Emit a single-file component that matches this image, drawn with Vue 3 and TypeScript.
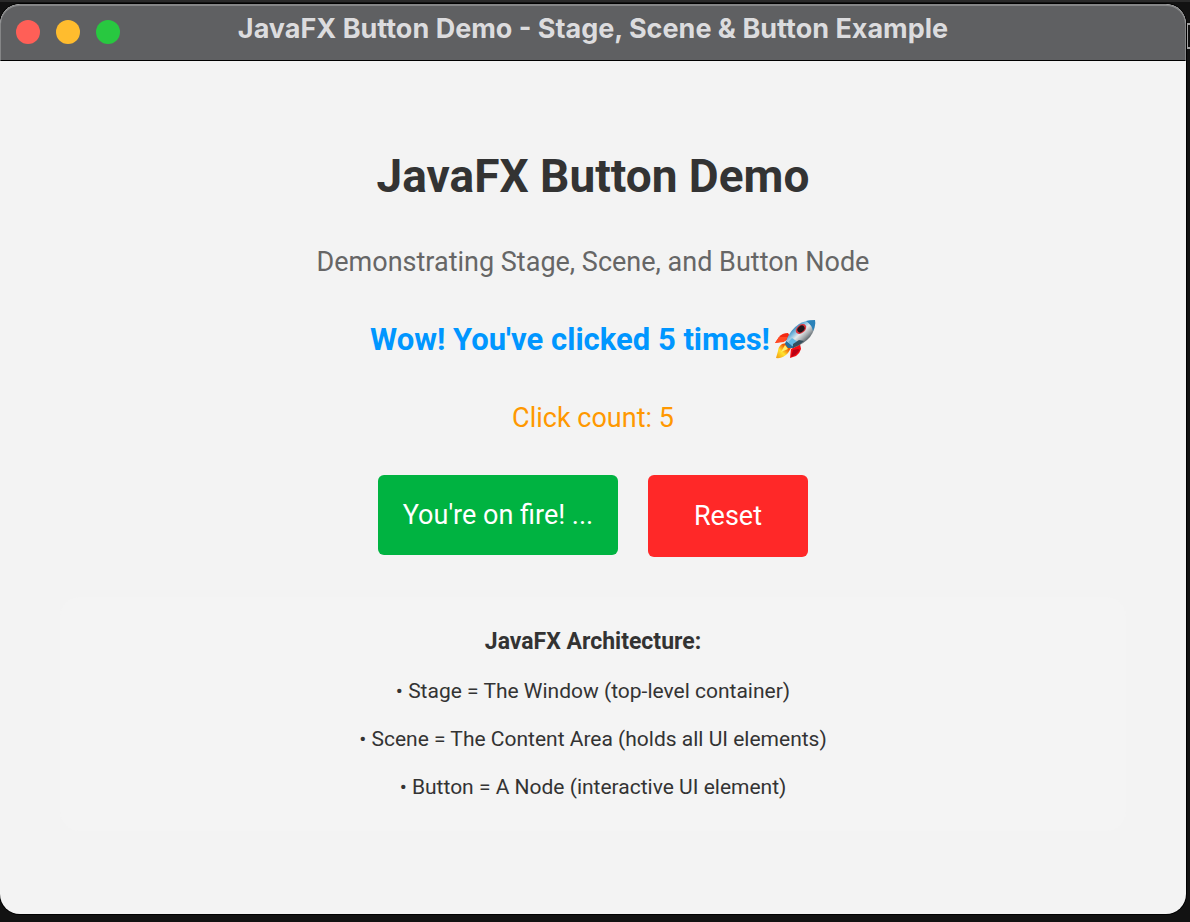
<script setup lang="ts">
import { computed, ref } from 'vue'

const clicks = ref<number>(5)

const message = computed<string>(() => {
  if (clicks.value === 0) return 'Welcome! Click the button below.'
  if (clicks.value === 1) return "You've clicked once!"
  return `Wow! You've clicked ${clicks.value} times!`
})
const buttonLabel = computed<string>(() => (clicks.value >= 5 ? "You're on fire! ..." : 'Click Me!'))

const notes: string[] = [
  '• Stage = The Window (top-level container)',
  '• Scene = The Content Area (holds all UI elements)',
  '• Button = A Node (interactive UI element)',
]
</script>

<template>
  <div class="desktop">
    <div class="behind" aria-hidden="true"></div>
    <section class="window">
      <header class="titlebar">
        <div class="lights">
          <button class="light close" aria-label="Close"></button>
          <button class="light minimize" aria-label="Minimize"></button>
          <button class="light zoom" aria-label="Zoom"></button>
        </div>
        <span class="caption">JavaFX Button Demo - Stage, Scene &amp; Button Example</span>
      </header>
      <main class="scene">
        <h1>JavaFX Button Demo</h1>
        <p class="subtitle">Demonstrating Stage, Scene, and Button Node</p>
        <p class="message">
          <span>{{ message }}</span>
          <svg class="rocket" viewBox="0 0 42 42" role="img" aria-label="Rocket">
            <defs>
              <linearGradient id="hull" x1="14" y1="12" x2="28" y2="27" gradientUnits="userSpaceOnUse">
                <stop offset="0" stop-color="#2674aa" />
                <stop offset=".25" stop-color="#76b7dc" />
                <stop offset=".5" stop-color="#e6eaec" />
                <stop offset=".75" stop-color="#a3aaae" />
                <stop offset="1" stop-color="#4d565c" />
              </linearGradient>
              <linearGradient id="flame" x1="12" y1="28" x2="2" y2="39" gradientUnits="userSpaceOnUse">
                <stop offset="0" stop-color="#f05a00" />
                <stop offset=".45" stop-color="#ffe32e" />
                <stop offset="1" stop-color="#f39a12" />
              </linearGradient>
            </defs>
            <path d="M14 14Q8 14 5 18L1 24L11 22L17 19Z" fill="#f32912" />
            <path d="M5 18L1 24L10 23L14 18Z" fill="#ff4b24" />
            <path d="M26 25L27 30Q26 34 22 37L16 39L17 30Z" fill="#f20d12" />
            <path d="M24 30L26 31L21 36L17 38L19 31Z" fill="#b90014" />
            <path d="M8 25Q4 28 4 32L2 39Q9 40 14 34L17 29L12 24Z" fill="url(#flame)" />
            <path d="M11 26L7 33L14 30Z" fill="#fff16a" />
            <path d="M12 22Q16 11 25 5Q32 1 41 1Q42 10 36 18Q30 25 19 29L14 28Z" fill="url(#hull)" />
            <path d="M32 2Q36 1 41 1Q42 6 39 12Q38 6 32 2Z" fill="#2a82b9" />
            <path d="M12 22L18 26L20 29L14 29L11 25Z" fill="#246f9e" />
            <path d="M18 19L24 23L18 27L14 23Z" fill="#64b9e3" />
            <path d="M19 25L25 21L30 22Q25 27 19 29Z" fill="#354f5d" />
            <ellipse cx="27" cy="10" rx="6" ry="4" transform="rotate(-40 27 10)" fill="#db3840" />
            <ellipse cx="27" cy="10" rx="4" ry="3" transform="rotate(-40 27 10)" fill="#20151b" />
          </svg>
        </p>
        <p class="count">Click count: {{ clicks }}</p>
        <div class="actions">
          <button class="action primary" @click="clicks++">{{ buttonLabel }}</button>
          <button class="action reset" @click="clicks = 0">Reset</button>
        </div>
        <section class="info">
          <h2>JavaFX Architecture:</h2>
          <p v-for="note in notes" :key="note">{{ note }}</p>
        </section>
      </main>
    </section>
  </div>
</template>

<style>
body {
  margin: 0;
  background: #0c0c0c;
}
</style>

<style scoped>
* {
  box-sizing: border-box;
}
.desktop {
  position: relative;
  display: flex;
  min-height: 100vh;
  padding: 4px 4px 8px 0;
  background: linear-gradient(#2a2a2a 0 2px, #121212 2px);
  font-family: Roboto, "Liberation Sans", sans-serif;
}
.behind {
  position: absolute;
  top: 23px;
  right: 0;
  width: 3px;
  height: 26px;
  border: solid #a0a0a0;
  border-width: 2px 0 2px 1px;
}
.window {
  position: relative;
  flex: 1;
  display: flex;
  flex-direction: column;
  overflow: hidden;
  border-radius: 20px;
  background: #f3f3f3;
  box-shadow: 0 0 0 1px #000;
}
.titlebar {
  display: grid;
  grid-template-columns: 1fr auto 1fr;
  align-items: center;
  height: 57px;
  padding: 0 15px 2px;
  border: 1px solid #858687;
  border-top-width: 2px;
  border-bottom-color: #000;
  border-radius: 20px 20px 0 0;
  background: #5f6062;
}
.lights {
  display: flex;
  gap: 16px;
}
.light {
  width: 24px;
  height: 24px;
  padding: 0;
  border: 0;
  border-radius: 50%;
}
.close {
  background: #ff5f57;
}
.minimize {
  background: #ffbc2e;
}
.zoom {
  background: #28c840;
}
.caption {
  padding-bottom: 6px;
  color: #dcdcde;
  font-family: Inter, "Liberation Sans", sans-serif;
  font-size: 27px;
  font-weight: 700;
  line-height: 32px;
  white-space: nowrap;
}
.scene {
  flex: 1;
  display: flex;
  flex-direction: column;
  align-items: center;
  justify-content: center;
  gap: 40px;
  padding: 62px 60px 60px;
  text-align: center;
}
h1,
h2,
p {
  margin: 0;
}
h1 {
  color: #333;
  font-size: 46px;
  font-weight: 700;
  line-height: 58px;
}
.subtitle {
  color: #666;
  font-size: 27px;
  line-height: 34px;
}
.message {
  display: flex;
  align-items: center;
  gap: 4px;
  color: #0096ff;
  font-size: 31px;
  font-weight: 700;
  line-height: 40px;
}
.rocket {
  width: 42px;
  height: 42px;
}
.count {
  color: #ff9800;
  font-size: 27px;
  line-height: 34px;
}
.actions {
  display: flex;
  gap: 30px;
}
.action {
  height: 82px;
  border: 0;
  border-radius: 6px;
  color: #fff;
  font-family: inherit;
  font-size: 27px;
  white-space: nowrap;
}
.primary {
  width: 240px;
  height: 80px;
  background: #00b341;
}
.reset {
  width: 160px;
  background: #ff2828;
}
.info {
  display: flex;
  flex-direction: column;
  gap: 20px;
  align-self: stretch;
  padding: 30px;
  border-radius: 20px;
  background: #f4f4f4;
  color: #333;
  font-size: 21px;
  line-height: 28px;
}
h2 {
  font-size: 23px;
  font-weight: 700;
  line-height: 30px;
}
</style>
